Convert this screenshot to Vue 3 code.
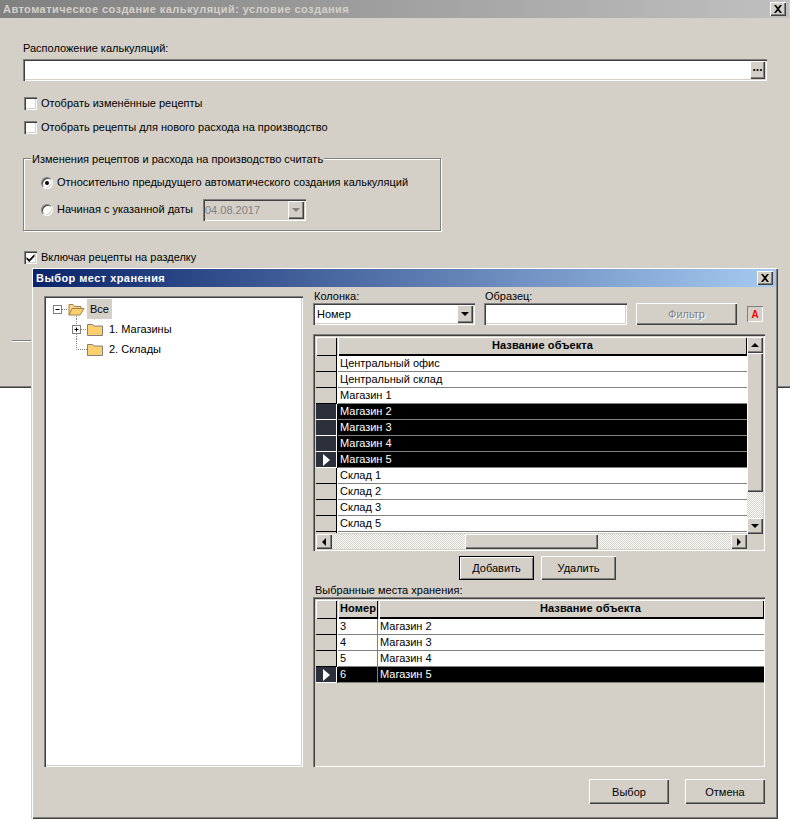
<script setup>
const objects = [
  { id: 1, name: 'Центральный офис' },
  { id: 2, name: 'Центральный склад' },
  { id: 3, name: 'Магазин 1' },
  { id: 4, name: 'Магазин 2', selected: true },
  { id: 5, name: 'Магазин 3', selected: true },
  { id: 6, name: 'Магазин 4', selected: true },
  { id: 7, name: 'Магазин 5', selected: true, current: true },
  { id: 8, name: 'Склад 1' },
  { id: 9, name: 'Склад 2' },
  { id: 10, name: 'Склад 3' },
  { id: 11, name: 'Склад 5' },
  { id: 12, name: '' }
]

const picked = [
  { num: '3', name: 'Магазин 2' },
  { num: '4', name: 'Магазин 3' },
  { num: '5', name: 'Магазин 4' },
  { num: '6', name: 'Магазин 5', selected: true, current: true }
]
</script>

<template>
  <div class="page">
    <div class="win-back">
      <div class="title title-off">
        <span class="title-text">Автоматическое создание калькуляций: условие создания</span>
        <button class="x-btn" type="button">
          <svg width="10" height="8" viewBox="0 0 10 8"><path d="M1 0h2l2 2.500L7 0h2L6 4l3 4H7L5 5.500 3 8H1l3-4z" fill="#000"/></svg>
        </button>
      </div>
      <div class="back-body">
        <div class="lbl">Расположение калькуляций:</div>
        <div class="path-input sunken">
          <button class="dots-btn raised" type="button">...</button>
        </div>
        <label class="check first"><span class="box"></span><span class="t">Отобрать изменённые рецепты</span></label>
        <label class="check second"><span class="box"></span><span class="t">Отобрать рецепты для нового расхода на производство</span></label>
        <div class="group">
          <span class="legend">Изменения рецептов и расхода на производство считать</span>
          <div class="radio-row"><span class="radio on"></span><span class="t">Относительно предыдущего автоматического создания калькуляций</span></div>
          <div class="radio-row date-row">
            <span class="radio"></span>
            <span class="date-lbl t">Начиная с указанной даты</span>
            <div class="date-combo sunken">
              <span>04.08.2017</span>
              <span class="combo-arrow raised"><i class="tri-down gray"></i></span>
            </div>
          </div>
        </div>
        <label class="check third">
          <span class="box">
            <svg width="9" height="9" viewBox="0 0 9 9"><path d="M0.500 4L3.300 6.600 8.500 1v2.400L3.300 9 0.500 6.300z" fill="#000"/></svg>
          </span><span class="t">Включая рецепты на разделку</span>
        </label>
        <div class="divider"></div>
        <div class="back-foot"><button class="btn raised" type="button">Отмена</button></div>
      </div>
    </div>

    <div class="win-top">
      <div class="title title-on">
        <span class="title-text">Выбор мест хранения</span>
        <button class="x-btn" type="button">
          <svg width="10" height="8" viewBox="0 0 10 8"><path d="M1 0h2l2 2.500L7 0h2L6 4l3 4H7L5 5.500 3 8H1l3-4z" fill="#000"/></svg>
        </button>
      </div>
      <div class="top-body">
        <div class="tree sunken">
          <div class="node">
            <svg width="39" height="20" viewBox="0 0 39 20">
              <path d="M14 10.500h5M28.500 15v5" stroke="#808080" stroke-dasharray="1 1" fill="none"/>
              <rect x="5.500" y="6.500" width="8" height="8" fill="#fff" stroke="#808080"/>
              <path d="M7.500 10.500h4" stroke="#000"/>
              <path d="M21 5.500h4l1.500 2H33v2h-8L21 16z" fill="#fdd78a" stroke="#a08050"/>
              <path d="M21 16l3-6.500h12L32 16z" fill="#fecf6d" stroke="#a08050"/>
            </svg>
            <span class="node-text active">Все</span>
          </div>
          <div class="node">
            <svg width="58" height="20" viewBox="0 0 58 20">
              <path d="M28.500 0v6M28.500 15v5M33 10.500h6" stroke="#808080" stroke-dasharray="1 1" fill="none"/>
              <rect x="24.500" y="6.500" width="8" height="8" fill="#fff" stroke="#808080"/>
              <path d="M26.500 10.500h4M28.500 8.500v4" stroke="#000"/>
              <path d="M39.500 16.500V5.500h5l1.500 1.500h8.500v9.500z" fill="#fecf6d" stroke="#808080"/>
            </svg>
            <span class="node-text">1. Магазины</span>
          </div>
          <div class="node">
            <svg width="58" height="20" viewBox="0 0 58 20">
              <path d="M28.500 0v10.500H39" stroke="#808080" stroke-dasharray="1 1" fill="none"/>
              <path d="M39.500 16.500V5.500h5l1.500 1.500h8.500v9.500z" fill="#fecf6d" stroke="#808080"/>
            </svg>
            <span class="node-text">2. Склады</span>
          </div>
        </div>

        <div class="side">
          <div class="filter">
            <div class="f-col">
              <div class="lbl">Колонка:</div>
              <div class="combo sunken">
                <span>Номер</span>
                <span class="combo-arrow raised"><i class="tri-down"></i></span>
              </div>
            </div>
            <div class="f-col">
              <div class="lbl">Образец:</div>
              <div class="sample sunken"></div>
            </div>
            <button class="btn raised filter-btn" type="button">Фильтр</button>
            <div class="case-box"><span>A</span></div>
          </div>

          <div class="grid grid-main sunken">
            <div class="grid-left">
              <div class="g-head">
                <div class="ind-head raised"></div>
                <div class="h-cell raised grow">Название объекта</div>
              </div>
              <div class="g-rows">
                <div v-for="row in objects" :key="row.id" class="g-row" :class="{ sel: row.selected }">
                  <div class="ind" :class="{ 'ind-sel': row.selected }"><i v-if="row.current" class="tri-right"></i></div>
                  <div class="cell grow">{{ row.name }}</div>
                </div>
              </div>
              <div class="hbar">
                <span class="sb-btn raised"><i class="tri-left"></i></span>
                <span class="track grow"></span>
                <span class="hthumb raised"></span>
                <span class="track grow"></span>
                <span class="sb-btn raised"><i class="tri-right black"></i></span>
              </div>
            </div>
            <div class="vbar">
              <span class="sb-btn raised"><i class="tri-up"></i></span>
              <span class="vthumb raised"></span>
              <span class="track grow"></span>
              <span class="sb-btn raised"><i class="tri-down"></i></span>
            </div>
          </div>

          <div class="actions">
            <button class="btn btn-default raised" type="button">Добавить</button>
            <button class="btn raised" type="button">Удалить</button>
          </div>
          <div class="lbl picked-lbl">Выбранные места хранения:</div>

          <div class="grid-picked sunken">
            <div class="g-head">
              <div class="ind-head raised"></div>
              <div class="h-cell raised num-col">Номер</div>
              <div class="h-cell raised grow name-head">Название объекта</div>
            </div>
            <div v-for="row in picked" :key="row.num" class="g-row" :class="{ sel: row.selected }">
              <div class="ind" :class="{ 'ind-sel': row.selected }"><i v-if="row.current" class="tri-right"></i></div>
              <div class="cell num-col num-cell">{{ row.num }}</div>
              <div class="cell grow name-cell">{{ row.name }}</div>
            </div>
          </div>
        </div>
      </div>
      <div class="top-foot">
        <button class="btn raised foot-btn" type="button">Выбор</button>
        <button class="btn raised foot-btn" type="button">Отмена</button>
      </div>
    </div>
  </div>
</template>

<style>
html, body {
  margin: 0;
  background: #fff;
}
</style>

<style scoped>
* {
  box-sizing: border-box;
}

.page {
  position: relative;
  width: 790px;
  height: 821px;
  overflow: hidden;
  font-family: "Liberation Sans", Arial, sans-serif;
  font-size: 11px;
  color: #000;
}

.sunken {
  background: #fff;
  box-shadow: inset 1px 1px #808080, inset 2px 2px #404040, inset -1px -1px #fff, inset -2px -2px #d4d0c8;
}

.raised {
  background: #d4d0c8;
  box-shadow: inset 1px 1px #fff, inset -1px -1px #404040, inset -2px -2px #808080;
}

.grow {
  flex: 1;
}

.t {
  padding-bottom: 2px;
}

.win-back {
  height: 388px;
  background: #d4d0c8;
  box-shadow: inset 0 -1px #404040, inset 0 -2px #808080;
}

.title {
  display: flex;
  align-items: center;
  justify-content: space-between;
  height: 18px;
  font-weight: bold;
  letter-spacing: 0.44px;
  white-space: nowrap;
}

.title-off {
  padding: 0 3px;
  margin-right: 1px;
  color: #d4d0c8;
  background: linear-gradient(90deg, #808080, #c0c0c0);
}

.title-on {
  padding: 0 3px 0 3px;
  color: #fff;
  background: linear-gradient(90deg, #0a246a, #a6caf0);
}

.x-btn {
  width: 16px;
  height: 14px;
  padding: 0;
  border: 0;
  display: flex;
  align-items: center;
  justify-content: center;
  background: #d4d0c8;
  box-shadow: inset 1px 1px #fff, inset -1px -1px #404040, inset -2px -2px #808080;
}

.back-body {
  padding: 23px 23px 0;
}

.lbl {
  height: 14px;
  line-height: 14px;
  white-space: nowrap;
}

.path-input {
  display: flex;
  justify-content: flex-end;
  height: 22px;
  margin-top: 4px;
  padding: 2px;
}

.dots-btn {
  width: 15px;
  height: 18px;
  padding: 0 0 6px;
  border: 0;
  font: bold 12px/10px "Liberation Sans", Arial, sans-serif;
}

.check {
  display: flex;
  align-items: center;
  height: 13px;
  white-space: nowrap;
}

.check.first {
  margin-top: 16px;
}

.check.second {
  margin-top: 11px;
}

.check.third {
  margin-top: 20px;
}

.box {
  display: flex;
  align-items: center;
  justify-content: center;
  flex: none;
  width: 13px;
  height: 13px;
  margin: 0 4px 0 1px;
  background: #fff;
  box-shadow: inset 1px 1px #808080, inset 2px 2px #404040, inset -1px -1px #fff, inset -2px -2px #d4d0c8;
}

.group {
  position: relative;
  width: 418px;
  height: 73px;
  margin-top: 24px;
  padding: 17px 0 0 17px;
  border: 1px solid #808080;
  box-shadow: 1px 1px #fff, inset 1px 1px #fff;
}

.legend {
  position: absolute;
  top: -7px;
  left: 7px;
  padding: 0 1px;
  line-height: 14px;
  white-space: nowrap;
  background: #d4d0c8;
}

.radio-row {
  display: flex;
  align-items: center;
  height: 13px;
  white-space: nowrap;
}

.date-row {
  height: 22px;
  margin-top: 10px;
}

.date-lbl {
  width: 146px;
}

.radio {
  position: relative;
  flex: none;
  width: 12px;
  height: 12px;
  margin-right: 4px;
  border-radius: 50%;
  background: #fff;
  border: 1px solid;
  border-color: #808080 #fff #fff #808080;
  box-shadow: inset 1px 1px #404040, inset -1px -1px #d4d0c8;
}

.radio.on::after {
  content: "";
  position: absolute;
  top: 3px;
  left: 3px;
  width: 4px;
  height: 4px;
  border-radius: 50%;
  background: #000;
}

.date-combo {
  display: flex;
  align-items: center;
  justify-content: space-between;
  width: 103px;
  height: 22px;
  padding: 2px 2px 2px 2px;
  background: #d4d0c8;
  color: #808080;
}

.combo-arrow {
  display: flex;
  align-items: center;
  justify-content: center;
  width: 16px;
  height: 18px;
}

.tri-down,
.tri-up,
.tri-left,
.tri-right {
  display: block;
  width: 0;
  height: 0;
}

.tri-down {
  border: 4px solid transparent;
  border-bottom: 0;
  border-top-color: #000;
}

.tri-down.gray {
  border-top-color: #808080;
}

.tri-up {
  border: 4px solid transparent;
  border-top: 0;
  border-bottom-color: #000;
}

.tri-left {
  border: 4px solid transparent;
  border-left: 0;
  border-right-color: #000;
}

.tri-right {
  border: 4px solid transparent;
  border-right: 0;
  border-left-color: #000;
}

.divider {
  height: 2px;
  margin: 76px -11px 0;
  border-top: 1px solid #808080;
  border-bottom: 1px solid #fff;
}

.back-foot {
  display: flex;
  justify-content: flex-end;
  margin: 11px 11px 0 0;
}

.btn {
  height: 24px;
  padding: 0;
  border: 0;
  font: 11px "Liberation Sans", Arial, sans-serif;
  color: #000;
}

.win-top {
  position: absolute;
  top: 267px;
  left: 31px;
  width: 747px;
  height: 552px;
  padding: 2px;
  background: #d4d0c8;
  box-shadow: inset 1px 1px #d4d0c8, inset 2px 2px #fff, inset -1px -1px #404040, inset -2px -2px #808080;
}

.top-body {
  display: flex;
  gap: 10px;
  padding: 2px 11px 0;
}

.tree {
  width: 259px;
  height: 471px;
  margin-top: 7px;
  padding: 3px 4px;
}

.node {
  display: flex;
  height: 20px;
  line-height: 20px;
}

.node-text {
  padding: 0 3px;
  white-space: nowrap;
}

.node-text.active {
  background: #d4d0c8;
}

.side {
  width: 452px;
}

.filter {
  display: flex;
  height: 45px;
}

.f-col {
  margin-right: 9px;
}

.f-col .lbl {
  padding-left: 1px;
}

.combo {
  display: flex;
  align-items: center;
  justify-content: space-between;
  width: 162px;
  height: 22px;
  padding: 2px 2px 2px 4px;
}

.sample {
  width: 143px;
  height: 22px;
}

.filter-btn {
  width: 101px;
  height: 22px;
  margin-top: 14px;
  color: #808080;
  text-shadow: 1px 1px #fff;
}

.case-box {
  display: flex;
  align-items: center;
  justify-content: center;
  width: 16px;
  height: 16px;
  margin: 17px 0 0 10px;
  font-weight: bold;
  font-size: 10px;
  color: #f00;
  background: #d4d0c8;
  box-shadow: inset 1px 1px #808080, inset -1px -1px #fff;
}

.grid {
  display: flex;
  height: 217px;
  padding: 3px 2px 2px 3px;
  background: #d4d0c8;
}

.grid-left {
  width: 431px;
}

.g-head {
  display: flex;
  height: 19px;
}

.ind-head {
  flex: none;
  width: 21px;
  box-shadow: inset 1px 1px #fff, inset -1px -1px #000, inset -2px -2px #d4d0c8;
}

.h-cell {
  margin-left: 1px;
  height: 19px;
  line-height: 17px;
  text-align: center;
  font-weight: bold;
  letter-spacing: 0.1px;
  box-shadow: inset 1px 1px #fff, inset -1px -1px #000, inset 0 -2px #000;
  white-space: nowrap;
}

.name-head {
  padding-left: 38px;
}

.g-rows {
  height: 177px;
  overflow: hidden;
}

.g-row {
  display: flex;
  height: 16px;
  background: #fff;
}

.ind {
  display: flex;
  align-items: center;
  justify-content: center;
  flex: none;
  width: 21px;
  height: 16px;
  background: #d4d0c8;
  box-shadow: inset -1px -1px #000;
}

.ind-sel {
  background: #2c303a;
  box-shadow: inset -1px 0 #fff, inset 0 -1px #fff;
}

.ind .tri-right {
  border-width: 6px 0 6px 7px;
  border-color: transparent;
  border-left-color: #fff;
}

.cell {
  height: 16px;
  padding-left: 2px;
  margin-left: 1px;
  line-height: 15px;
  white-space: nowrap;
  border-bottom: 1px solid #808080;
}

.num-cell {
  border-right: 1px solid #808080;
}

.name-cell {
  margin-left: 0;
}

.sel .cell {
  color: #fff;
  background: #000;
}

.sel {
  background: #000;
}

.hbar {
  display: flex;
  height: 15px;
  margin-top: 1px;
}

.hbar .sb-btn {
  height: 15px;
}

.sb-btn {
  display: flex;
  align-items: center;
  justify-content: center;
  flex: none;
  width: 16px;
  height: 16px;
}

.track {
  background: conic-gradient(#fff 25%, #d4d0c8 0 50%, #fff 0 75%, #d4d0c8 0) 0 0 / 2px 2px;
}

.hthumb {
  flex: none;
  width: 133px;
}

.vbar {
  display: flex;
  flex-direction: column;
  width: 16px;
  height: 197px;
}

.vthumb {
  flex: none;
  height: 139px;
}

.actions {
  display: flex;
  gap: 7px;
  margin: 5px 0 0 146px;
}

.actions .btn {
  width: 75px;
}

.btn-default {
  box-shadow: inset 0 0 0 1px #000, inset 2px 2px #fff, inset -2px -2px #808080;
}

.picked-lbl {
  margin: 3px 0 0 2px;
}

.grid-picked {
  height: 170px;
  padding: 3px 1px 2px 3px;
  background: #d4d0c8;
}

.num-col {
  flex: none;
  width: 40px;
}

.top-foot {
  display: flex;
  justify-content: flex-end;
  gap: 16px;
  margin: 12px 11px 0 0;
}

.foot-btn {
  width: 80px;
  height: 25px;
}
</style>
